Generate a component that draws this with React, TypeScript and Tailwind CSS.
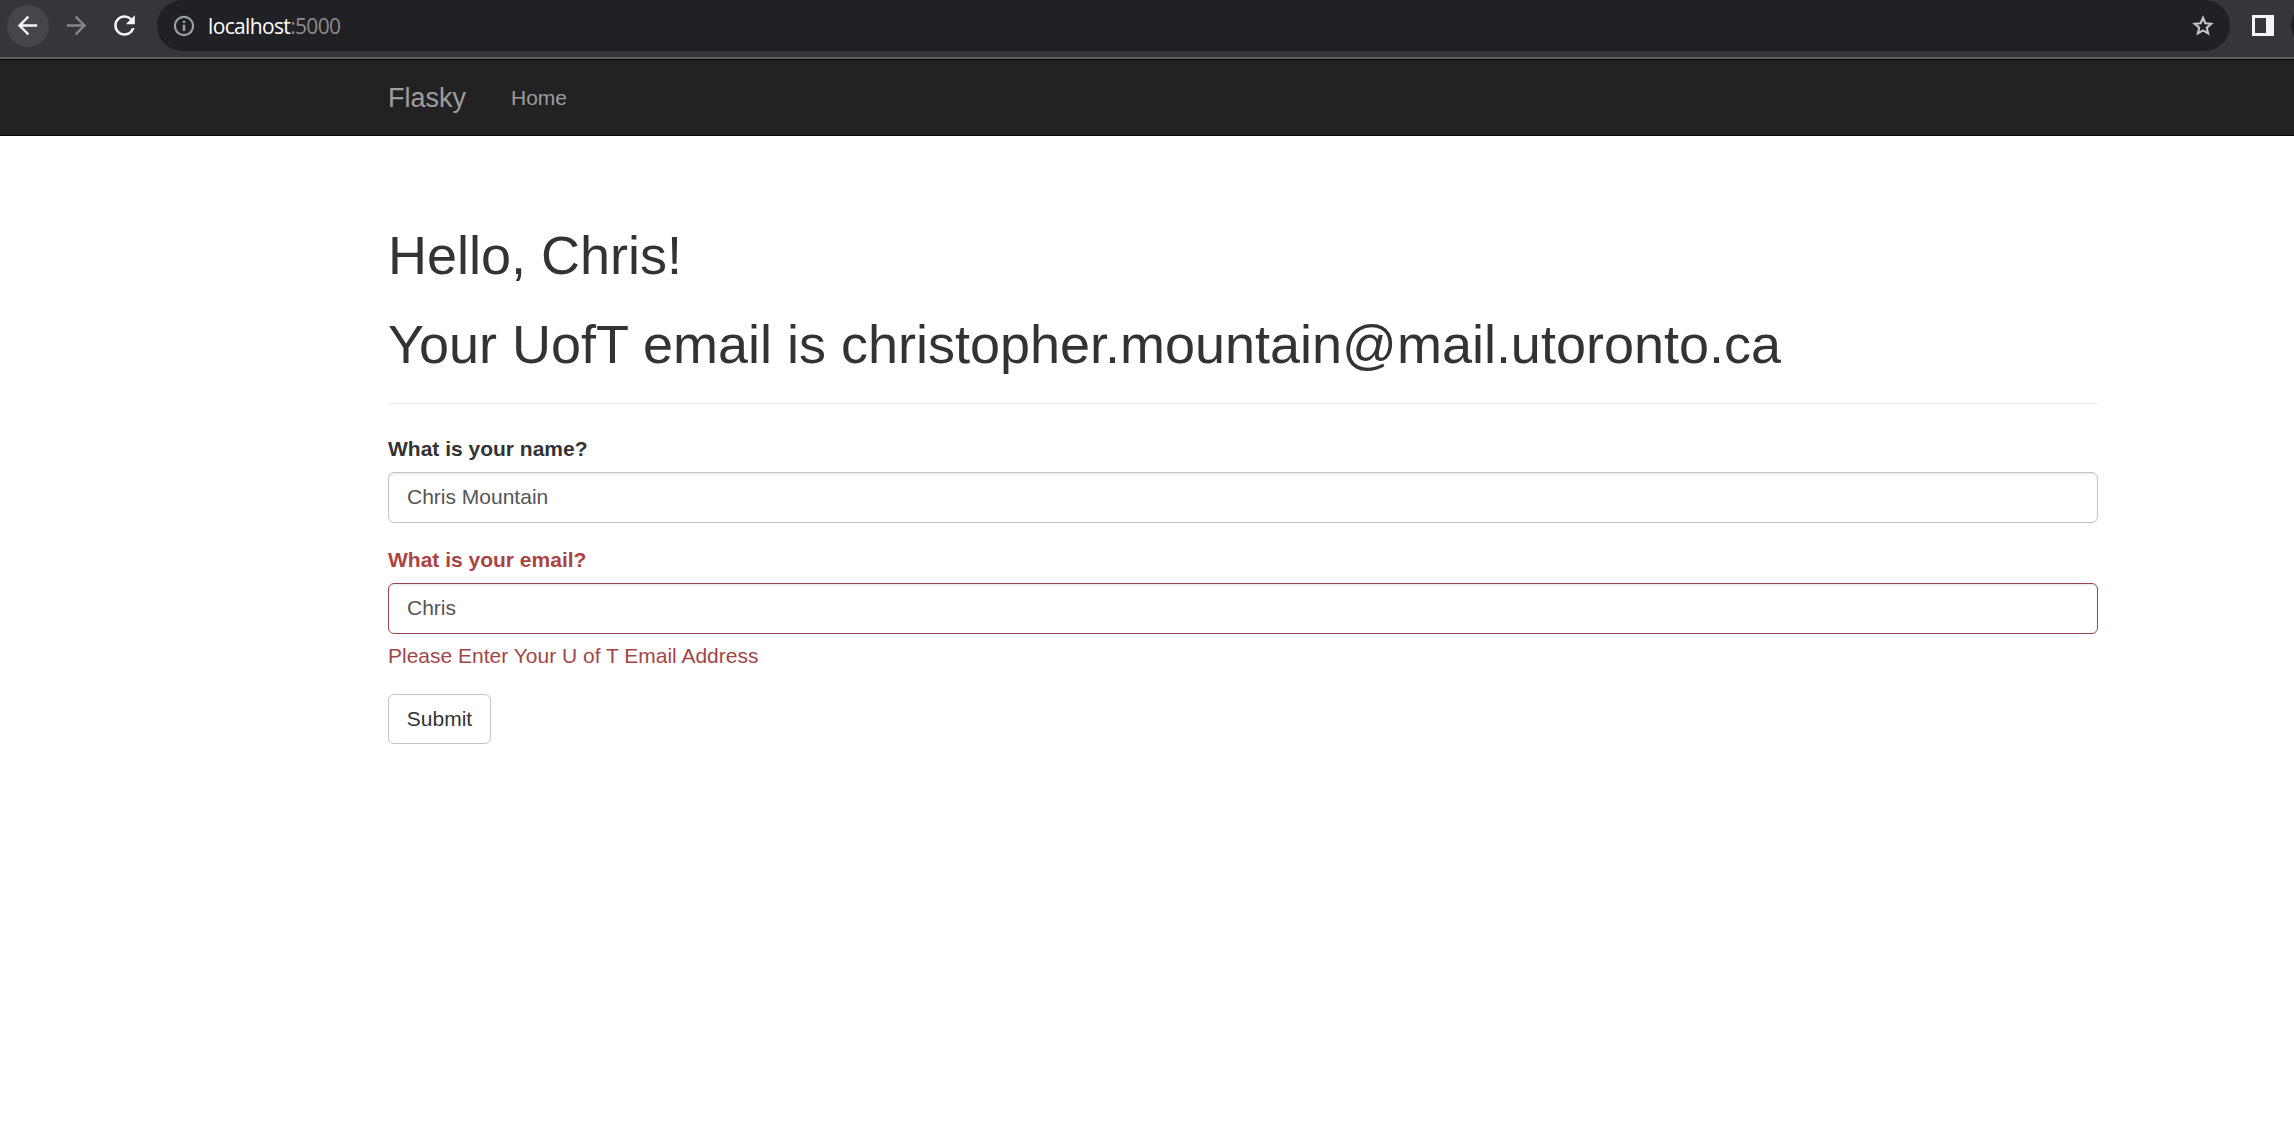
import React from "react";
import { MdArrowBack, MdArrowForward, MdRefresh } from "react-icons/md";

function InfoIcon() {
  return (
    <svg width="22" height="22" viewBox="0 0 22 22" fill="none" stroke="#9aa0a6" className="mt-px shrink-0">
      <circle cx="11" cy="11" r="9.1" strokeWidth="2.2" />
      <path d="M11 9.7v6.3M11 5.7v2.3" strokeWidth="2.5" />
    </svg>
  );
}

function StarIcon() {
  return (
    <svg width="26" height="26" viewBox="0 0 24 24" fill="none" stroke="#c5c7ca" strokeWidth="1.9" className="ml-auto shrink-0">
      <path d="M12 4.4l2.15 5.05 5.5.48-4.17 3.6 1.25 5.37L12 16.05l-4.73 2.85 1.25-5.37-4.17-3.6 5.5-.48z" />
    </svg>
  );
}

function BrowserBar() {
  return (
    <div className="flex h-[59px] items-start overflow-hidden border-b-2 border-[#5f5f5f] bg-[#35363a]">
      <div className="flex h-[51px] w-[157px] shrink-0 items-center pl-[7px]">
        <div className="flex size-[42px] items-center justify-center rounded-full bg-[#45464a] pr-px text-[#f4f5f8]">
          <MdArrowBack size={29} />
        </div>
        <MdArrowForward size={29} className="ml-[13px] text-[#85868a]" />
        <MdRefresh size={31} className="ml-[18px] text-[#f4f5f8]" />
      </div>
      <div className="flex h-[51px] w-[2073px] shrink-0 items-center rounded-full bg-[#202124] pl-[16px] pr-[14px]">
        <InfoIcon />
        <div className="ml-[13px] font-['Open_Sans','Noto_Sans',sans-serif] text-[21px] leading-[30px] tracking-[-0.65px] text-white">
          localhost<span className="text-[#8b8c8f]">:5000</span>
        </div>
        <StarIcon />
      </div>
      <div className="ml-[22px] mt-[15px] h-[21px] w-[22px] shrink-0 border-y-[3px] border-l-[3px] border-r-[8px] border-[#f4f5f8]" />
      <div className="ml-[17px] mt-[4px] size-[42px] shrink-0 rounded-full bg-[#202124]" />
    </div>
  );
}

export default function App() {
  return (
    <div className="h-[1135px] overflow-hidden bg-white font-['Liberation_Sans',Arial,sans-serif] text-[21px] leading-[30px] text-[#333]">
      <BrowserBar />
      <nav className="flex h-[77px] items-center border-y border-[#080808] bg-[#222] pl-[388px] text-[#9d9d9d]">
        <a className="text-[27px]">Flasky</a>
        <a className="ml-[45px]">Home</a>
      </nav>
      <main className="ml-[388px] w-[1710px] pt-[90px]">
        <h1 className="text-[54px] leading-[59.4px]">Hello, Chris!</h1>
        <h1 className="mt-[30px] text-[54px] leading-[59.4px] tracking-[-0.01px]">
          Your UofT email is christopher.mountain@mail.utoronto.ca
        </h1>
        <hr className="mt-[28px] border-t border-[#eee]" />
        <form className="mt-[30px]">
          <label className="block font-bold">What is your name?</label>
          <input
            className="mt-[8px] block h-[51px] w-full rounded-[6px] border border-[#c4c4c4] px-[18px] text-[#555] shadow-[inset_0_1.5px_1.5px_rgba(0,0,0,0.075)] outline-none"
            defaultValue="Chris Mountain"
          />
          <label className="mt-[22px] block font-bold text-[#a94442]">What is your email?</label>
          <input
            className="mt-[8px] block h-[51px] w-full rounded-[6px] border border-[#974550] px-[18px] text-[#555] shadow-[inset_0_1.5px_1.5px_rgba(0,0,0,0.075)] outline-none"
            defaultValue="Chris"
          />
          <p className="mt-[7px] text-[#a14648]">Please Enter Your U of T Email Address</p>
          <button type="button" className="mt-[23px] block h-[50px] w-[103px] rounded-[6px] border border-[#c4c4c4] bg-white text-center">
            Submit
          </button>
        </form>
      </main>
    </div>
  );
}
